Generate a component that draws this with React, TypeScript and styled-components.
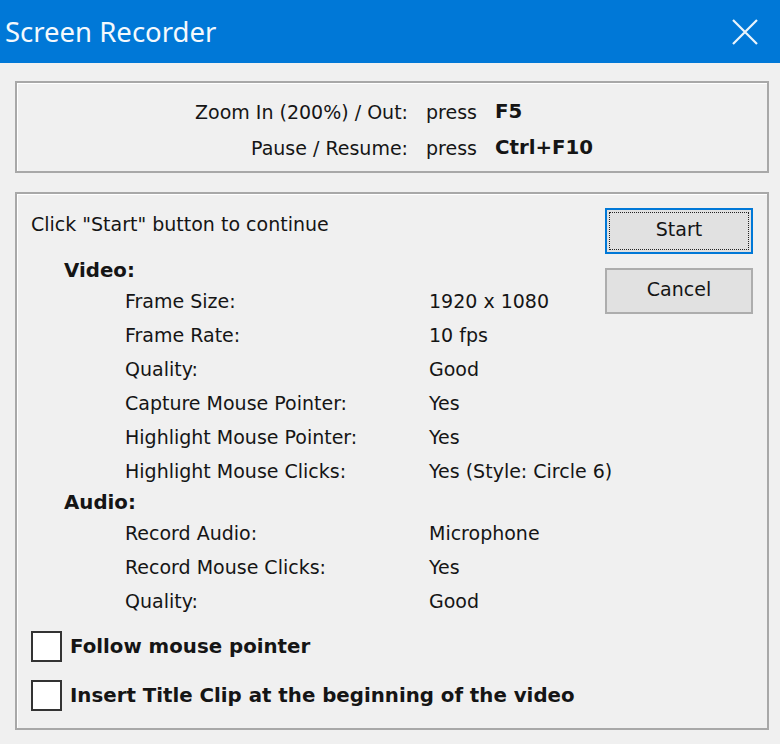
import React from "react";
import styled, { createGlobalStyle } from "styled-components";

const Global = createGlobalStyle`
  html, body { margin: 0; padding: 0; background: #f0f0f0; }
  body { font-family: "DejaVu Sans", sans-serif; color: #151515; }
`;

const Window = styled.div`
  width: 780px;
  height: 744px;
  background: #f0f0f0;
  display: flex;
  flex-direction: column;
  overflow: hidden;
`;

const TitleBar = styled.div`
  height: 63px;
  background: #0078d7;
  display: flex;
  align-items: center;
  justify-content: space-between;
  padding: 0 22px 0 5px;
  box-sizing: border-box;
`;

const Title = styled.div`
  font-family: "Noto Sans", sans-serif;
  font-size: 27.5px;
  color: #f4f9fd;
  margin-top: -1px;
`;

const Body = styled.div`
  flex: 1;
  display: flex;
  flex-direction: column;
  gap: 19px;
  padding: 18px 11px 0 15px;
`;

const Group = styled.div<{ $h: number }>`
  height: ${(p) => p.$h}px;
  box-sizing: border-box;
  border: 2px solid #a8a8a8;
  box-shadow: inset 1px 1px 0 #fff;
`;

const KeyGrid = styled.div`
  display: grid;
  grid-template-columns: 391px auto auto;
  justify-content: start;
  column-gap: 18px;
  padding-top: 11px;
  font-size: 19px;
`;

const KeyLabel = styled.div`
  text-align: right;
  line-height: 36px;
`;

const KeyCell = styled.div<{ $bold?: boolean }>`
  line-height: 36px;
  font-weight: ${(p) => (p.$bold ? 700 : 400)};
  font-size: ${(p) => (p.$bold ? "19.8px" : "19px")};
`;

const MainRow = styled.div`
  display: flex;
  padding: 13px 14px 0 14px;
`;

const Content = styled.div`
  flex: 1;
  min-width: 0;
  display: flex;
  flex-direction: column;
  font-size: 19px;
  white-space: nowrap;
`;

const Line = styled.div`
  line-height: 34px;
`;

const Header = styled.div<{ $mt: number }>`
  font-weight: 700;
  font-size: 19.8px;
  line-height: 26px;
  margin: ${(p) => p.$mt}px 0 0 33px;
`;

const Item = styled.div`
  display: grid;
  grid-template-columns: 304px auto;
  margin-left: 94px;
  line-height: 34px;
`;

const Checks = styled.div`
  display: flex;
  flex-direction: column;
  gap: 18px;
  margin-top: 13px;
`;

const CheckRow = styled.label`
  display: flex;
  align-items: center;
  gap: 8px;
  font-weight: 700;
  font-size: 19.8px;
`;

const Box = styled.span`
  width: 31px;
  height: 31px;
  flex: none;
  box-sizing: border-box;
  border: 2px solid #333;
  background: #fff;
`;

const Buttons = styled.div`
  display: flex;
  flex-direction: column;
  gap: 14px;
  padding-top: 1px;
`;

const Button = styled.button<{ $focus?: boolean }>`
  width: 148px;
  height: 46px;
  box-sizing: border-box;
  background: #e1e1e1;
  border: 2px solid ${(p) => (p.$focus ? "#0078d7" : "#adadad")};
  font-family: "DejaVu Sans", sans-serif;
  font-size: 19px;
  color: #151515;
  padding: 0 0 4px;
  outline: ${(p) => (p.$focus ? "1px dotted #222" : "none")};
  outline-offset: -5px;
`;

const videoRows: [string, string][] = [
  ["Frame Size:", "1920 x 1080"],
  ["Frame Rate:", "10 fps"],
  ["Quality:", "Good"],
  ["Capture Mouse Pointer:", "Yes"],
  ["Highlight Mouse Pointer:", "Yes"],
  ["Highlight Mouse Clicks:", "Yes (Style: Circle 6)"],
];

const audioRows: [string, string][] = [
  ["Record Audio:", "Microphone"],
  ["Record Mouse Clicks:", "Yes"],
  ["Quality:", "Good"],
];

export default function App() {
  return (
    <Window>
      <Global />
      <TitleBar>
        <Title>Screen Recorder</Title>
        <svg width="26" height="26" viewBox="0 0 26 26">
          <path d="M1 1 L25 25 M25 1 L1 25" stroke="#eaf4fc" strokeWidth="2.2" />
        </svg>
      </TitleBar>
      <Body>
        <Group $h={92}>
          <KeyGrid>
            <KeyLabel>Zoom In (200%) / Out:</KeyLabel>
            <KeyCell>press</KeyCell>
            <KeyCell $bold>F5</KeyCell>
            <KeyLabel>Pause / Resume:</KeyLabel>
            <KeyCell>press</KeyCell>
            <KeyCell $bold>Ctrl+F10</KeyCell>
          </KeyGrid>
        </Group>
        <Group $h={538}>
          <MainRow>
            <Content>
              <Line>Click "Start" button to continue</Line>
              <Header $mt={17}>Video:</Header>
              {videoRows.map(([k, v], i) => (
                <Item key={"v" + i}>
                  <span>{k}</span>
                  <span>{v}</span>
                </Item>
              ))}
              <Header $mt={2}>Audio:</Header>
              {audioRows.map(([k, v], i) => (
                <Item key={"a" + i}>
                  <span>{k}</span>
                  <span>{v}</span>
                </Item>
              ))}
              <Checks>
                <CheckRow>
                  <Box />
                  Follow mouse pointer
                </CheckRow>
                <CheckRow>
                  <Box />
                  Insert Title Clip at the beginning of the video
                </CheckRow>
              </Checks>
            </Content>
            <Buttons>
              <Button $focus>Start</Button>
              <Button>Cancel</Button>
            </Buttons>
          </MainRow>
        </Group>
      </Body>
    </Window>
  );
}
